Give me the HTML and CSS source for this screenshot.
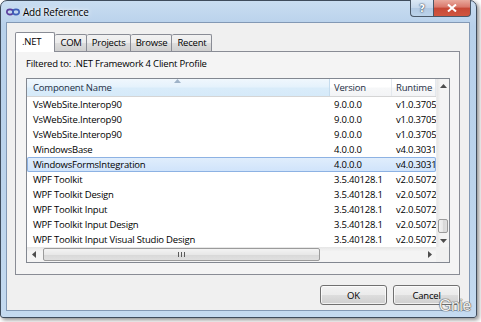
FILE: index.html
```html
<!DOCTYPE html>
<html lang="en">
<head>
    <meta charset="UTF-8">
    <title>Add Reference</title>
    <link rel="stylesheet" href="styles.css">
</head>
<body>
    <div class="window">
        <div class="titlebar">
            <svg class="app-icon" width="14" height="8" viewBox="0 0 14 8">
                <ellipse cx="4" cy="4" rx="3.2" ry="2.6" fill="none" stroke="#5b3d9c" stroke-width="1.6"/>
                <ellipse cx="10" cy="4" rx="3.2" ry="2.6" fill="none" stroke="#3d5fb8" stroke-width="1.6"/>
            </svg>
            <span class="title">Add Reference</span>
            <div class="caption-buttons">
                <div class="cap-btn help">?</div>
                <div class="cap-btn close">
                    <svg width="10" height="8" viewBox="0 0 10 8">
                        <path d="M1 0.5 L9 7.5 M9 0.5 L1 7.5" stroke="#fff" stroke-width="2"/>
                    </svg>
                </div>
            </div>
        </div>

        <div class="client">
            <div class="tabs">
                <div class="tab selected">.NET</div>
                <div class="tab">COM</div>
                <div class="tab">Projects</div>
                <div class="tab">Browse</div>
                <div class="tab">Recent</div>
            </div>
            <div class="panel">
                <div class="filter">Filtered to: .NET Framework 4 Client Profile</div>
                <div class="list">
                    <div class="table">
                        <div class="row header">
                            <div class="cell sorted">Component Name
                                <svg class="sort-arrow" width="7" height="4" viewBox="0 0 7 4"><path d="M0 4 L3.5 0 L7 4 Z" fill="#9fb3c8"/></svg>
                            </div>
                            <div class="cell">Version</div>
                            <div class="cell">Runtime</div>
                        </div>
                        <div class="row"><div class="cell">VsWebSite.Interop90</div><div class="cell">9.0.0.0</div><div class="cell">v1.0.3705</div></div>
                        <div class="row"><div class="cell">VsWebSite.Interop90</div><div class="cell">9.0.0.0</div><div class="cell">v1.0.3705</div></div>
                        <div class="row"><div class="cell">VsWebSite.Interop90</div><div class="cell">9.0.0.0</div><div class="cell">v1.0.3705</div></div>
                        <div class="row"><div class="cell">WindowsBase</div><div class="cell">4.0.0.0</div><div class="cell">v4.0.3031</div></div>
                        <div class="row selected"><div class="cell">WindowsFormsIntegration</div><div class="cell">4.0.0.0</div><div class="cell">v4.0.3031</div></div>
                        <div class="row"><div class="cell">WPF Toolkit</div><div class="cell">3.5.40128.1</div><div class="cell">v2.0.5072</div></div>
                        <div class="row"><div class="cell">WPF Toolkit Design</div><div class="cell">3.5.40128.1</div><div class="cell">v2.0.5072</div></div>
                        <div class="row"><div class="cell">WPF Toolkit Input</div><div class="cell">3.5.40128.1</div><div class="cell">v2.0.5072</div></div>
                        <div class="row"><div class="cell">WPF Toolkit Input Design</div><div class="cell">3.5.40128.1</div><div class="cell">v2.0.5072</div></div>
                        <div class="row"><div class="cell">WPF Toolkit Input Visual Studio Design</div><div class="cell">3.5.40128.1</div><div class="cell">v2.0.5072</div></div>
                    </div>
                    <div class="vscroll">
                        <div class="arrow"><svg width="7" height="4" viewBox="0 0 7 4"><path d="M0 4 L3.5 0 L7 4 Z" fill="#4d4d4d"/></svg></div>
                        <div class="track"></div>
                        <div class="thumb"></div>
                        <div class="arrow"><svg width="7" height="4" viewBox="0 0 7 4"><path d="M0 0 L3.5 4 L7 0 Z" fill="#4d4d4d"/></svg></div>
                    </div>
                    <div class="hscroll">
                        <div class="arrow"><svg width="4" height="7" viewBox="0 0 4 7"><path d="M4 0 L0 3.5 L4 7 Z" fill="#4d4d4d"/></svg></div>
                        <div class="thumb"><span class="grip"></span></div>
                        <div class="track"></div>
                        <div class="arrow"><svg width="4" height="7" viewBox="0 0 4 7"><path d="M0 0 L4 3.5 L0 7 Z" fill="#4d4d4d"/></svg></div>
                    </div>
                    <div class="corner"></div>
                </div>
            </div>
            <div class="buttons">
                <button class="btn">OK</button>
                <button class="btn">Cancel</button>
            </div>
        </div>
    </div>
    <div class="watermark">Gnie</div>
</body>
</html>
```

FILE: styles.css
```css
* {
    box-sizing: border-box;
}
body {
    margin: 0;
    background: #fff;
    font-family: "Open Sans", "Noto Sans", sans-serif;
    font-size: 9.5px;
    letter-spacing: -0.2px;
    color: #000;
    position: relative;
    width: 481px;
    height: 322px;
    overflow: hidden;
}
.window {
    width: 477px;
    height: 318px;
    padding: 0 6px 6px 5px;
    border: 1px solid #3f4c5c;
    border-radius: 7px 7px 3px 3px;
    background: linear-gradient(180deg, #c9ddf1 0%, #b8d1eb 8%, #bcd4ec 60%, #c4daf0 100%);
    box-shadow: 2px 2px 4px rgba(0, 0, 0, 0.45);
}
.titlebar {
    height: 21px;
    display: flex;
    align-items: center;
    position: relative;
}
.app-icon {
    margin: 1px 3px 0 0;
}
.title {
    font-size: 10px;
    margin-top: 1px;
    text-shadow: 0 0 6px #fff, 0 0 3px #fff;
}
.caption-buttons {
    position: absolute;
    top: -1px;
    right: -1px;
    display: flex;
}
.cap-btn {
    height: 17px;
    border: 1px solid #4a5868;
    border-top: none;
    display: flex;
    align-items: center;
    justify-content: center;
}
.help {
    width: 23px;
    border-radius: 0 0 0 4px;
    border-right: none;
    background: linear-gradient(180deg, #dbe8f5 0%, #c4d7ec 50%, #b1c9e3 51%, #bcd3ea 100%);
    color: #fff;
    font-family: "DejaVu Sans", sans-serif;
    font-weight: bold;
    font-size: 10px;
    text-shadow: 0 0 2px #2c3e55, 0 0 1px #2c3e55;
}
.close {
    width: 38px;
    border-radius: 0 0 4px 0;
    background: linear-gradient(180deg, #e9a99d 0%, #d9776a 45%, #c74836 50%, #d0563f 100%);
}
.client {
    height: 289px;
    border: 1px solid #8399b5;
    background: #f0f0f0;
    padding: 9px 9px 0 8px;
}
.tabs {
    display: flex;
    align-items: flex-end;
    height: 19px;
    position: relative;
    z-index: 1;
}
.tab {
    height: 17px;
    padding: 0 4px 0 5px;
    border: 1px solid #898c95;
    border-left: none;
    border-bottom: none;
    border-radius: 2px 2px 0 0;
    background: linear-gradient(180deg, #f2f2f2 0%, #ebebeb 50%, #dddddd 51%, #cfcfcf 100%);
    line-height: 16px;
}
.tab.selected {
    height: 20px;
    margin-bottom: -1px;
    border-left: 1px solid #898c95;
    background: #fff;
    padding: 0 13px 0 6px;
    line-height: 17px;
}
.panel {
    height: 224px;
    border: 1px solid #898c95;
    background: #f4f4f4;
    padding: 5px 9px 0 10px;
}
.filter {
    line-height: 14px;
    margin-bottom: 7px;
}
.list {
    width: 424px;
    height: 185px;
    border: 1px solid #828790;
    background: #fff;
    display: grid;
    grid-template-columns: 1fr 13px;
    grid-template-rows: 1fr 15px;
}
.table {
    overflow: hidden;
}
.row {
    display: grid;
    grid-template-columns: 303px 62px 44px;
    height: 15px;
    line-height: 15px;
}
.cell {
    padding-left: 6px;
    white-space: nowrap;
    overflow: hidden;
}
.row .cell + .cell {
    padding-left: 4px;
}
.row .cell:last-child {
    padding-left: 4px;
}
.header {
    height: 18px;
    line-height: 17px;
    color: #1e2f45;
    background: linear-gradient(180deg, #ffffff 0%, #ffffff 45%, #f6f7f8 55%, #f3f4f6 100%);
    border-bottom: 1px solid #d5d5d5;
}
.header .cell {
    border-right: 1px solid #e3e8ee;
    position: relative;
}
.header .cell.sorted {
    background: linear-gradient(180deg, #f0f7fd 0%, #e5f2fc 45%, #d9ecfa 55%, #d6eaf9 100%);
    border-right-color: #c5dcee;
}
.sort-arrow {
    position: absolute;
    top: 0;
    left: 147px;
}
.row.selected {
    background: linear-gradient(180deg, #e1eefc 0%, #cfe3fb 100%);
    box-shadow: inset 0 0 0 1px #8db2e3;
    border-radius: 2px;
}
.vscroll {
    grid-row: 1;
    grid-column: 2;
    display: flex;
    flex-direction: column;
    background: linear-gradient(90deg, #e6e6e6 0%, #f4f4f4 30%, #f4f4f4 100%);
    border-left: 1px solid #ececec;
}
.hscroll {
    display: flex;
    background: linear-gradient(180deg, #e6e6e6 0%, #f4f4f4 30%, #f4f4f4 100%);
}
.arrow {
    width: 13px;
    height: 13px;
    display: flex;
    align-items: center;
    justify-content: center;
}
.hscroll .arrow {
    height: 15px;
}
.track {
    flex: 1;
}
.vscroll .thumb {
    height: 14px;
    margin: 0 1px 1px 1px;
    border: 1px solid #9b9b9b;
    border-radius: 2px;
    background: linear-gradient(90deg, #f3f3f3 0%, #e8e8e8 50%, #d8d8d8 51%, #e0e0e0 100%);
}
.hscroll .thumb {
    width: 277px;
    margin: 1px 0 1px 3px;
    border: 1px solid #9b9b9b;
    border-radius: 2px;
    background: linear-gradient(180deg, #f3f3f3 0%, #e8e8e8 50%, #d8d8d8 51%, #e0e0e0 100%);
    display: flex;
    align-items: center;
    justify-content: center;
}
.grip {
    width: 7px;
    height: 5px;
    background: repeating-linear-gradient(90deg, #5a5a5a 0 1px, transparent 1px 3px);
}
.corner {
    background: #f0f0f0;
}
.buttons {
    display: flex;
    justify-content: flex-end;
    gap: 6px;
    margin-top: 10px;
    padding-right: 0;
}
.btn {
    width: 67px;
    height: 20px;
    padding: 0;
    font-family: "Open Sans", "Noto Sans", sans-serif;
    font-size: 9.5px;
    letter-spacing: -0.2px;
    color: #000;
    border: 1px solid #707070;
    border-radius: 3px;
    background: linear-gradient(180deg, #f2f2f2 0%, #ebebeb 50%, #dddddd 51%, #cfcfcf 100%);
    box-shadow: inset 0 0 0 1px rgba(255, 255, 255, 0.7);
}
.watermark {
    position: absolute;
    left: 439px;
    top: 297px;
    font-family: "Liberation Sans", sans-serif;
    font-size: 16px;
    letter-spacing: -0.5px;
    color: #eeeeee;
    text-shadow: 0 0 1px #5a5a5a, 0 0 1px #5a5a5a, 0 0 1px #5a5a5a;
}
```
